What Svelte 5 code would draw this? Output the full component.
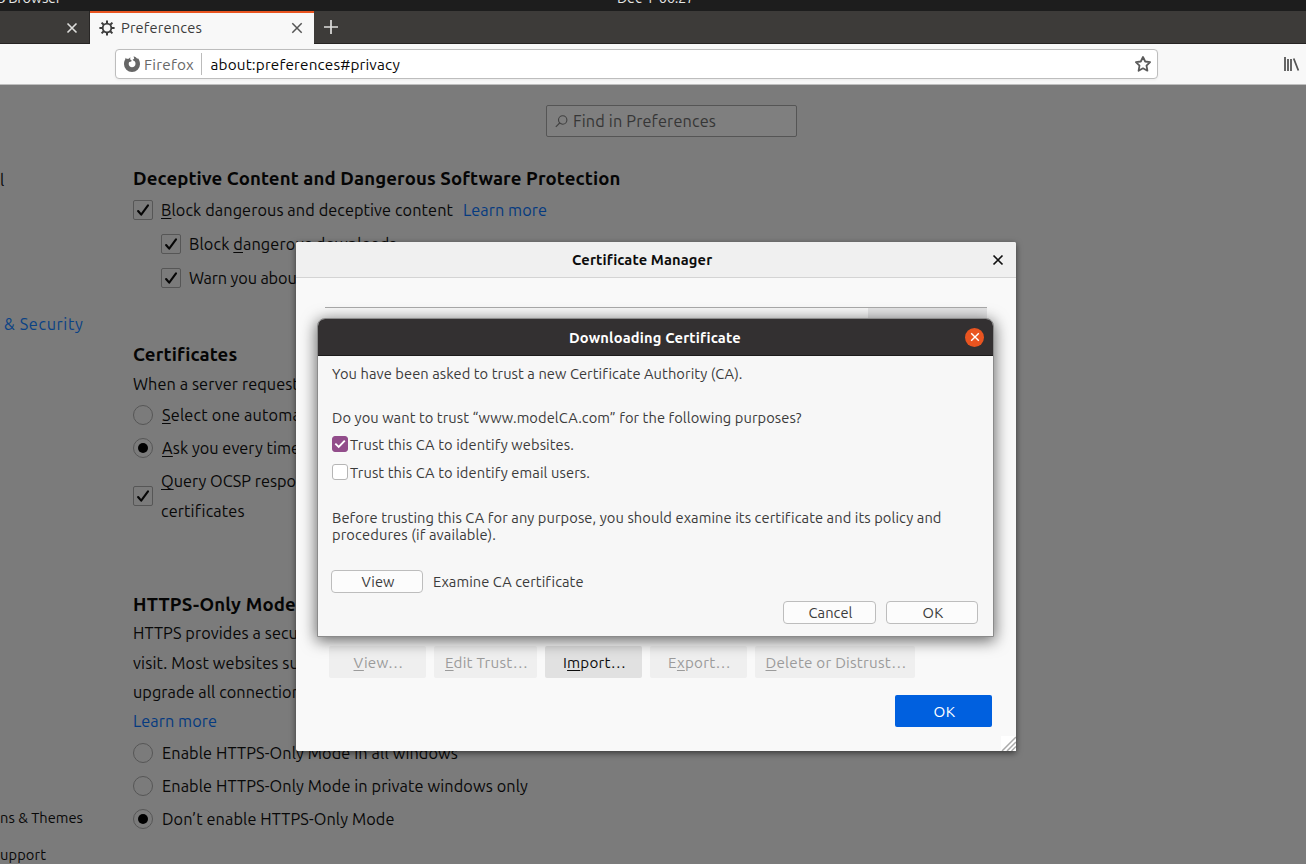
<script>
  // Tunes letter-spacing so a label takes the given width.
  function fit(node, width) {
    const range = document.createRange();
    range.selectNodeContents(node);
    const natural = range.getBoundingClientRect().width;
    const count = node.textContent.length;
    node.style.letterSpacing = `${(width - natural) / count}px`;
  }

  const blockRows = [
    { pre: 'Block ', key: 'd', post: 'angerous downloads', w: 207.5 },
    { pre: 'Warn you about unwanted', key: '', post: '', w: 190 }
  ];
  const certRadios = [
    { key: 'S', post: 'elect one automatically', w: 183, on: false },
    { key: 'A', post: 'sk you every time', w: 138, on: true }
  ];
  const httpsLines = [
    { text: 'HTTPS provides a secu', w: 165 },
    { text: 'visit. Most websites su', w: 166 },
    { text: 'upgrade all connection', w: 168 }
  ];
  const httpsRadios = [
    { text: 'Enable HTTPS-Only Mode in all windows', w: 296, on: false },
    { text: 'Enable HTTPS-Only Mode in private windows only', w: 366, on: false },
    { text: 'Don’t enable HTTPS-Only Mode', w: 232.5, on: true }
  ];
  const actions = [
    { pre: '', key: 'V', post: 'iew…', w: 50, box: 97, on: false },
    { pre: '', key: 'E', post: 'dit Trust…', w: 83, box: 103, on: false },
    { pre: 'I', key: 'm', post: 'port…', w: 63, box: 97, on: true },
    { pre: 'E', key: 'x', post: 'port…', w: 63, box: 97, on: false },
    { pre: '', key: 'D', post: 'elete or Distrust…', w: 141, box: 160, on: false }
  ];
</script>

{#snippet check()}
  <span class="box">
    <svg width="20" height="20" viewBox="0 0 20 20"><path d="M5.1 11 8.2 14.6 15 5.4" fill="none" stroke="#060606" stroke-width="2.1" stroke-linecap="round" stroke-linejoin="round" /></svg>
  </span>
{/snippet}

{#snippet radio(on)}
  <span class="radio">{#if on}<i></i>{/if}</span>
{/snippet}

<div class="screen">
  <div class="desktop-bar">
    <span class="app-name" use:fit={64}>b Browser</span>
    <span class="clock" use:fit={77}>Dec 4  06:27</span>
  </div>

  <div class="tabs">
    <div class="old-tab">
      <svg width="12" height="12" viewBox="0 0 12 12"><path d="M1.5 1.5l9 9M10.5 1.5l-9 9" stroke="#dededc" stroke-width="1.6" /></svg>
    </div>
    <div class="tab">
      <svg width="16" height="16" viewBox="0 0 16 16" fill="none" stroke="#3c3c3c">
        <circle cx="8" cy="8" r="4.3" stroke-width="1.8" />
        <path d="M8 .4v3M8 12.6v3M.4 8h3M12.6 8h3M2.6 2.6l2.1 2.1M11.3 11.3l2.1 2.1M13.4 2.6l-2.1 2.1M4.7 11.3l-2.1 2.1" stroke-width="2" />
      </svg>
      <span class="tab-title"><span use:fit={81}>Preferences</span></span>
      <svg width="12" height="12" viewBox="0 0 12 12"><path d="M1.3 1.3l9.4 9.4M10.7 1.3l-9.4 9.4" stroke="#555" stroke-width="1.5" /></svg>
    </div>
    <svg class="plus" width="14" height="14" viewBox="0 0 14 14"><path d="M7 0v14M0 7h14" stroke="#dededc" stroke-width="1.7" /></svg>
  </div>

  <div class="toolbar">
    <div class="url">
      <svg width="16" height="16" viewBox="0 0 16 16">
        <path d="M1.700 1.800 2.900 3C3.500 2.700 4.200 2.600 4.800 2.700L6.300 1.300 6.200 3.400 7.600 4.300 7.300 5.400 5.300 6.100C4.900 6.600 4.700 7.200 4.700 7.900c0 1.900 1.500 3.300 3.300 3.300 2 0 3.500-1.500 3.500-3.500 0-1.700-.8-2.800-2.300-3.200L8.600 3.700 10.200 2.800 9.600.3C11.300.8 12.500 1.600 13.200 2.800L14 2.300C15.300 3.900 16 5.900 16 8.200a8 7.700 0 0 1-16 0C0 6.100.4 4.600 1.200 3.500z" fill="#666" />
      </svg>
      <span class="brand"><span use:fit={50}>Firefox</span></span>
      <span class="address"><span use:fit={189.5}>about:preferences#privacy</span></span>
      <svg class="star" width="18" height="18" viewBox="0 0 18 18"><path d="M9 2l2.200 4.500 4.900.7-3.600 3.500.9 5L9 13.300l-4.400 2.400.9-5L1.900 7.200l4.900-.7z" fill="none" stroke="#5a5a5a" stroke-width="1.8" stroke-linejoin="round" /></svg>
    </div>
    <svg class="library" width="16" height="14" viewBox="0 0 16 14"><path d="M1 0v14M4 2v12M7 2v12M9.700 1.500l4.700 12" stroke="#555" stroke-width="1.8" fill="none" /></svg>
  </div>

  <div class="page">
    <nav>
      <span class="general">l</span>
      <span class="privacy"><span use:fit={79.5}>&amp; Security</span></span>
      <span class="themes"><span use:fit={83}>ns &amp; Themes</span></span>
      <span class="support"><span use:fit={46}>upport</span></span>
    </nav>
    <main>
      <div class="search">
        <svg width="13" height="13" viewBox="0 0 13 13" fill="none" stroke="#404040" stroke-width="1.1"><circle cx="7.700" cy="5" r="4.200" /><path d="M4.700 8 .8 11.900" /></svg>
        <span use:fit={143}>Find in Preferences</span>
      </div>

      <h2 class="first"><span use:fit={487.5}>Deceptive Content and Dangerous Software Protection</span></h2>
      <div class="row gap2">
        {@render check()}
        <span class="label" use:fit={292}><u>B</u>lock dangerous and deceptive content</span>
        <a href="#learn" class="aside"><span use:fit={84}>Learn more</span></a>
      </div>
      {#each blockRows as r}
        <div class="row gap2 nested">
          {@render check()}
          <span class="label" use:fit={r.w}>{r.pre}<u>{r.key}</u>{r.post}</span>
        </div>
      {/each}

      <h2 class="second"><span use:fit={104}>Certificates</span></h2>
      <p class="intro"><span use:fit={173}>When a server requests</span></p>
      {#each certRadios as r}
        <div class="row gap1">
          {@render radio(r.on)}
          <span class="label wide" use:fit={r.w}><u>{r.key}</u>{r.post}</span>
        </div>
      {/each}
      <div class="row query">
        {@render check()}
        <div class="label lines">
          <div><span use:fit={169}><u>Q</u>uery OCSP responder</span></div>
          <div><span use:fit={83}>certificates</span></div>
        </div>
      </div>

      <h2 class="third"><span use:fit={163}>HTTPS-Only Mode</span></h2>
      <div class="https">
        {#each httpsLines as l}
          <p><span use:fit={l.w}>{l.text}</span></p>
        {/each}
        <p><a href="#learn"><span use:fit={84}>Learn more</span></a></p>
      </div>
      {#each httpsRadios as r}
        <div class="row gap1">
          {@render radio(r.on)}
          <span class="label wide" use:fit={r.w}>{r.text}</span>
        </div>
      {/each}
    </main>
  </div>

  <section class="manager">
    <header>
      <b><span use:fit={140}>Certificate Manager</span></b>
      <svg width="12" height="12" viewBox="0 0 12 12"><path d="M1.500 1.500l9 9M10.500 1.500l-9 9" stroke="#111" stroke-width="1.7" /></svg>
    </header>
    <div class="tree"><div class="picker"></div></div>
    <div class="actions">
      {#each actions as a}
        <button class:on={a.on} style:width="{a.box}px"><span use:fit={a.w}>{a.pre}<u>{a.key}</u>{a.post}</span></button>
      {/each}
    </div>
    <button class="primary"><span use:fit={22}>OK</span></button>
    <svg class="grip" width="15" height="15" viewBox="0 0 15 15"><path d="M0 0h15v15H0z" fill="#fff" /><path d="M1 15 15 1M6 15l9-9M10.500 15l4.500-4.500" stroke="#aaa" stroke-width="1.500" /></svg>
  </section>

  <section class="download">
    <header>
      <b><span use:fit={171.5}>Downloading Certificate</span></b>
      <span class="close"><svg width="10" height="10" viewBox="0 0 10 10"><path d="M1.200 1.200l7.600 7.600M8.800 1.200l-7.600 7.600" stroke="#fff" stroke-width="1.400" /></svg></span>
    </header>
    <div class="body">
      <p class="asked"><span use:fit={410}>You have been asked to trust a new Certificate Authority (CA).</span></p>
      <p class="question"><span use:fit={469.5}>Do you want to trust “www.modelCA.com” for the following purposes?</span></p>
      <div class="trust">
        <span class="tick on"><svg width="16" height="16" viewBox="0 0 16 16"><path d="M3.300 7.600 6.700 10.900 12.800 4.700" fill="none" stroke="#fff" stroke-width="1.900" /></svg></span>
        <span use:fit={224}>Trust this CA to identify websites.</span>
      </div>
      <div class="trust">
        <span class="tick"></span>
        <span use:fit={240}>Trust this CA to identify email users.</span>
      </div>
      <p class="before"><span use:fit={609}>Before trusting this CA for any purpose, you should examine its certificate and its policy and</span></p>
      <p><span use:fit={164}>procedures (if available).</span></p>
      <div class="examine">
        <button><span use:fit={33}>View</span></button>
        <span use:fit={150}>Examine CA certificate</span>
      </div>
      <div class="confirm">
        <button class="cancel"><span use:fit={44}>Cancel</span></button>
        <button><span use:fit={21}>OK</span></button>
      </div>
    </div>
  </section>
</div>

<style>
  :global(body) { margin: 0; overflow: hidden; }
  .screen { position: relative; width: 1306px; height: 864px; overflow: hidden; display: flex; flex-direction: column; background: #7b7b7b; font: 16.300px Ubuntu, "Noto Sans", sans-serif; color: #080808; white-space: nowrap; }
  .screen * { box-sizing: border-box; }
  svg { display: block; flex: none; }
  p, h2 { margin: 0; font-weight: normal; }
  u { text-decoration: underline; text-decoration-thickness: 1px; text-underline-offset: 2px; text-decoration-skip-ink: none; }
  button { font: inherit; padding: 0; display: flex; align-items: center; justify-content: center; }

  .desktop-bar { height: 11px; flex: none; background: #1d1d1d; color: #e6e6e6; font-size: 14.670px; display: flex; align-items: flex-end; overflow: hidden; }
  .desktop-bar span { line-height: 20px; margin-bottom: 3px; flex: none; }
  .app-name { width: 64px; margin-left: -3px; }
  .clock { margin-left: 556px; white-space: pre; }

  .tabs { height: 33px; flex: none; display: flex; align-items: center; background: #3d3b39; border-bottom: 1px solid #262423; }
  .old-tab { width: 90px; height: 32px; display: flex; justify-content: flex-end; align-items: center; padding-right: 11px; padding-top: 2px; border-right: 1px solid #282625; }
  .tab { width: 224px; height: 33px; margin-bottom: -1px; border-top: 2px solid #e95420; background: #f8f8f8; display: flex; align-items: center; padding: 0 11px 1px 9px; color: #3c3c3c; font-size: 14.670px; }
  .tab-title { flex: 1; margin-left: 6px; padding-bottom: 2px; }
  .plus { margin-left: 10px; }

  .toolbar { height: 41px; flex: none; display: flex; align-items: center; background: #f8f8f8; border-bottom: 1px solid #bfbfbf; padding-left: 115px; }
  .url { width: 1043px; height: 30px; border: 1px solid #bdbdbd; border-radius: 4px; background: #fff; display: flex; align-items: center; padding: 0 5px 0 8px; font-size: 15.300px; box-shadow: 0 1px 3px #0000000d; }
  .brand { width: 58px; margin-left: 4px; height: 22px; line-height: 24px; border-right: 1px solid #bbb; color: #686868; }
  .address { flex: 1; margin-left: 8.500px; color: #080808; }
  .library { margin-left: 126px; }

  .page { flex: 1; min-height: 0; display: flex; }
  nav { width: 133px; flex: none; display: flex; flex-direction: column; align-items: flex-start; }
  nav > span { height: 24px; line-height: 24px; flex: none; }
  .general { margin-top: 83px; }
  .privacy { margin: 120px 0 0 4px; color: #0a4285; }
  .themes { margin-top: 470px; font-size: 14.670px; }
  .support { margin-top: 13px; font-size: 14.670px; }
  main { flex: 1; display: flex; flex-direction: column; }
  .search { width: 251px; height: 32px; flex: none; margin: 20px 0 0 413px; border: 1px solid #555; border-radius: 2px; background: #7f7f7f; display: flex; align-items: center; gap: 5px; padding-left: 8px; color: #363636; }
  h2 { height: 26px; line-height: 26px; flex: none; font-size: 18.600px; font-weight: 700; color: #050505; }
  .first { margin-top: 29px; }
  .second { margin-top: 48px; }
  .third { margin-top: 66px; }
  .intro { height: 28px; line-height: 28px; flex: none; margin-top: 2px; }
  .row { height: 32px; flex: none; display: flex; align-items: center; }
  .gap1 { margin-top: 1px; }
  .gap2 { margin-top: 2px; }
  .nested { margin-left: 28px; }
  .query { height: 60px; margin-top: 2px; }
  .box, .radio { width: 20px; height: 20px; flex: none; border: 1px solid #565656; border-radius: 2px; }
  .box svg { margin: -1px; }
  .radio { border-radius: 50%; display: flex; align-items: center; justify-content: center; }
  .radio i { width: 10px; height: 10px; border-radius: 50%; background: #000; }
  .label { margin-left: 8px; }
  .wide { margin-left: 9px; }
  .lines { line-height: 30px; }
  .aside { margin-left: 10px; }
  a { color: #053a80; text-decoration: none; }
  .https { margin: 1px 0 0; height: 117px; flex: none; display: flex; flex-direction: column; }
  .https p { height: 29px; line-height: 29px; }
  .https p:first-child { height: 30px; }

  .manager { position: absolute; left: 296px; top: 242px; width: 720px; height: 509px; background: #f9f9f9; border-radius: 2px; box-shadow: 0 2px 6px #0000008c; display: flex; flex-direction: column; }
  .manager header { height: 36px; flex: none; border-bottom: 1px solid #d4d4d4; background: #f0f0f0; border-radius: 2px 2px 0 0; display: flex; align-items: center; padding-right: 12px; font-size: 14.670px; color: #0c0c0c; }
  .manager header b { flex: 1; padding-left: 276px; }
  .tree { margin: 29px 29px 0; height: 339px; border-top: 1px solid #aaa; display: flex; justify-content: flex-end; }
  .picker { width: 119px; height: 28px; background: #e5e5e6; }
  .actions { display: flex; gap: 8px; padding-left: 33px; }
  .actions button, .primary { height: 32px; border: 0; border-radius: 2px; background: #efefef; color: #9b9b9b; font-size: 15.200px; padding-left: 2px; }
  .actions button.on { background: #e1e1e1; color: #0c0c0c; }
  .manager .primary { width: 97px; margin: 17px 24px 0 auto; background: #0060df; color: #fff; }
  .grip { margin: 9px 0 0 auto; }

  .download { position: absolute; left: 317px; top: 318px; width: 677px; height: 319px; border: 1px solid #8b8b8b; border-radius: 8px 8px 0 0; background: #f7f7f7; box-shadow: 0 3px 15px 1px #00000094; color: #3b3b3b; font-size: 14.670px; display: flex; flex-direction: column; }
  .download header { height: 37px; flex: none; background: #333031; border-bottom: 1px solid #1c1b1b; border-radius: 7px 7px 0 0; display: flex; align-items: center; color: #fff; padding-right: 9px; }
  .download header b { flex: 1; padding: 1px 0 0 251px; }
  .close { width: 19px; height: 19px; border-radius: 50%; background: #e95420; display: flex; align-items: center; justify-content: center; }
  .body { padding: 9px 15px 0 14px; display: flex; flex-direction: column; }
  .body p { height: 17px; line-height: 17px; flex: none; }
  .body .question { margin-top: 27px; }
  .trust { height: 28px; display: flex; align-items: center; gap: 2px; }
  .question + .trust { margin-top: 4px; }
  .tick { width: 16px; height: 16px; border: 1px solid #b5b5b5; border-radius: 3px; background: #fff; }
  .tick.on { border-color: #924d8b; background: #924d8b; }
  .tick svg { margin: -1px; }
  .body .before { margin-top: 23px; }
  .download button { width: 92px; height: 23px; border: 1px solid #bdbdbd; border-radius: 4px; background: #fcfcfc; color: #3b3b3b; padding-left: 2px; }
  .examine { display: flex; align-items: center; gap: 10px; margin: 27px 0 0 -1px; height: 23px; }
  .confirm { display: flex; justify-content: flex-end; gap: 10px; margin-top: 8px; }
  .confirm .cancel { width: 93px; }
</style>
